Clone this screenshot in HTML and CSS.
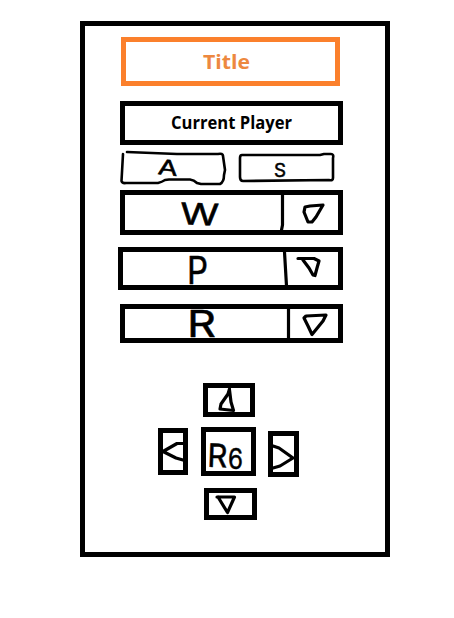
FILE: index.html
```html
<!DOCTYPE html>
<html lang="en">
<head>
<meta charset="utf-8">
<title>Player controls</title>
<link rel="stylesheet" href="styles.css">
</head>
<body>
<main class="frame">
  <header class="box title"><svg viewBox="126 42 209 39"><text x="203" y="69" textLength="47" lengthAdjust="spacingAndGlyphs">Title</text></svg></header>
  <section class="box player"><svg viewBox="125 106 213 34"><text x="171" y="129" textLength="121" lengthAdjust="spacingAndGlyphs">Current Player</text></svg></section>
  <div class="tabs">
    <svg class="tab-a" viewBox="120 149 108 37">
      <path d="M123 154L122 172L121.500 181Q122 183.500 126 183L158 183Q162 182 165 180L169 179.500H190Q194 180 197 183L201 184H220Q224 182 224 175L225 170L223 156Q223 153 218 154L177 154L127 152"/>
      <text class="ink" x="158" y="175" font-size="21" textLength="20" lengthAdjust="spacingAndGlyphs" transform="rotate(6 168 168)">A</text>
    </svg>
    <svg class="tab-s" viewBox="238 152 98 31">
      <path d="M242 155L320 155L324 154L331 154Q334 154 333 158L333 178Q333 181 329 180L243 181Q240 181 240 177L240 158Q240 155 242 155"/>
      <text class="ink" x="274" y="177" font-size="19" textLength="12" lengthAdjust="spacingAndGlyphs">S</text>
    </svg>
  </div>
  <div class="box row row-w"><svg viewBox="125 195 213 35">
    <text class="ink" x="180" y="225" font-size="30" textLength="39" lengthAdjust="spacingAndGlyphs" transform="rotate(2 199 214)">W</text>
    <path d="M282.500 194L282.500 225L281.500 230M305 207L310 206L323 205L316 217L312 222L308 222L304 212Z"/>
  </svg></div>
  <div class="box row row-p"><svg viewBox="123 252 215 33">
    <text class="ink" x="187" y="284" font-size="38" textLength="21" lengthAdjust="spacingAndGlyphs">P</text>
    <path d="M284.500 252L285.500 269L286.500 286M298 258.500L314 258.500L319 261L317 268L315 275.500L313 275L309 268L303 260"/>
  </svg></div>
  <div class="box row row-r"><svg viewBox="125 309 213 29">
    <text class="ink" x="187" y="336.500" font-size="37" textLength="29" lengthAdjust="spacingAndGlyphs">R</text>
    <path d="M288.500 309V339M306 316L326 315L323 321L312 334.500L308 326L304 318Z"/>
  </svg></div>
  <nav class="pad">
    <div class="box up"><svg viewBox="208 388 42 24"><path d="M229.500 389L228 394L221 404L220 409L233.500 410.500L231 402L229.500 390"/></svg></div>
    <div class="box left"><svg viewBox="163 433 20 37"><path d="M183 443.500H177L163 451.500L176 458L183 460"/></svg></div>
    <div class="box center"><svg viewBox="206 432 45 39">
      <text class="ink" x="207.500" y="467" font-size="32" textLength="20" lengthAdjust="spacingAndGlyphs" transform="rotate(2 217 455)">R</text><text class="ink" x="228" y="468.500" font-size="28" textLength="15" lengthAdjust="spacingAndGlyphs">6</text>
    </svg></div>
    <div class="box right"><svg viewBox="273 436 21 36"><path d="M273 446L279 448L293 458L280 466L273 468"/></svg></div>
    <div class="box down"><svg viewBox="209 493 43 22"><path d="M217 497H234.500L227.500 512.500L218 497"/></svg></div>
  </nav>
</main>
</body>
</html>
```
FILE: styles.css
```css
* { box-sizing: border-box; }
body { margin: 0; padding: 21px 0 0 80px; background: #fff; color: #000; }
.frame { width: 310px; height: 536px; border: 5px solid #000; padding: 11px 0 0 35px; }
.box { border: 5px solid #000; }
svg { display: block; width: 100%; height: 100%; overflow: visible; }
path { fill: none; stroke: #000; stroke-width: 3.2; stroke-linejoin: round; stroke-linecap: round; }
.ink { font-family: Inter, sans-serif; font-weight: 400; fill: #000; stroke: #000; stroke-width: 0.5; stroke-linejoin: round; }
.title { width: 219px; height: 49px; margin-left: 1px; border-color: #fb802c; }
.title text { font: 700 20px "Open Sans", sans-serif; fill: #ed8840; }
.player { width: 223px; height: 44px; margin-top: 15px; }
.player text { font: 700 18px "Open Sans", sans-serif; }
.tabs { display: flex; gap: 10px; height: 37px; margin-top: 4px; }
.tabs path { stroke-width: 2.600; }
.tab-a { width: 108px; }
.tab-s { width: 98px; height: 31px; margin-top: 3px; }
.row { width: 223px; }
.row-w { height: 45px; margin-top: 4px; }
.row-p { width: 225px; height: 43px; margin: 12px 0 0 -2px; }
.row-r { height: 39px; margin-top: 14px; }
.pad { display: grid; grid-template-columns: 30px 57px 31px; column-gap: 12px; grid-template-rows: 34px 50px 32px; row-gap: 10px; margin: 40px 0 0 38px; justify-content: start; }
.up { grid-column: 2; width: 52px; height: 34px; margin-left: 3px; }
.left { grid-column: 1; grid-row: 2; height: 47px; margin-top: 1px; }
.center { grid-column: 2; grid-row: 2; width: 55px; height: 49px; margin-left: 1px; }
.right { grid-column: 3; grid-row: 2; width: 31px; height: 46px; margin: 4px 0 0 -1px; }
.down { grid-column: 2; grid-row: 3; width: 53px; height: 32px; margin: 1px 0 0 4px; }
```
